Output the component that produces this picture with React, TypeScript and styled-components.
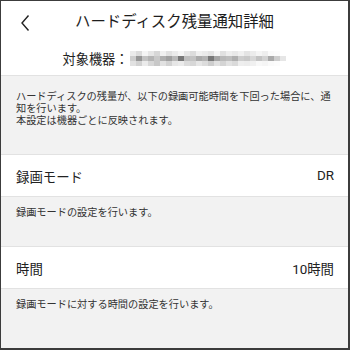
import React from "react";
import styled, { createGlobalStyle } from "styled-components";

const Global = createGlobalStyle`
  html, body { margin: 0; padding: 0; background: #fff; }
  * { box-sizing: border-box; }
`;

const Frame = styled.div`
  width: 350px;
  height: 350px;
  overflow: hidden;
  background: #f2f2f2;
  border-style: solid;
  border-color: #3c3c3c;
  border-width: 1px 2px 2px 1px;
  font-family: Roboto, "Noto Sans CJK JP", sans-serif;
  color: #222;
  display: flex;
  flex-direction: column;
`;

const Header = styled.header`
  background: #fff;
  height: 75px;
  border-bottom: 1px solid #e2e2e2;
  display: flex;
  flex-direction: column;
`;

const TitleBar = styled.div`
  position: relative;
  height: 40px;
  display: flex;
  align-items: center;
  justify-content: center;
`;

const Back = styled.button`
  position: absolute;
  left: 14px;
  top: 9px;
  width: 20px;
  height: 26px;
  border: none;
  background: none;
  padding: 0;
  display: flex;
  align-items: center;
  justify-content: center;
`;

const Title = styled.h1`
  margin: 0;
  font-size: 15.4px;
  font-weight: 400;
  line-height: 20px;
  color: #1e1e1e;
  transform: translate(0px, 1px);
`;

const Target = styled.div`
  display: flex;
  align-items: center;
  justify-content: center;
  height: 34px;
  font-size: 13.2px;
  color: #222;
  gap: 2px;
`;

const Blur = styled.div`
  display: grid;
  grid-template-columns: repeat(26, 6px);
  grid-template-rows: repeat(3, 5px);
`;

const Cell = styled.span<{ $g: number }>`
  display: block;
  background: ${(p) => `rgb(${p.$g},${p.$g},${p.$g})`};
`;

const Note = styled.div<{ $top: number; $bottom: number }>`
  padding: ${(p) => p.$top}px 15px ${(p) => p.$bottom}px 15px;
  font-size: 10.2px;
  line-height: 12px;
  color: #333;
`;

const Row = styled.div`
  background: #fff;
  height: 43px;
  border-top: 1px solid #e2e2e2;
  border-bottom: 1px solid #e2e2e2;
  display: flex;
  align-items: center;
  justify-content: space-between;
  padding: 0 14px 0 15px;
  font-size: 13.4px;
  color: #222;
`;

const Value = styled.span`
  font-size: 13.4px;
`;

const pattern = [
  [235, 220, 245, 230, 215, 240, 225, 235, 245, 230, 220, 240, 235, 228, 245, 225, 238, 232, 240, 228, 236, 245, 238, 250, 252, 255],
  [205, 150, 195, 180, 200, 175, 160, 185, 120, 190, 195, 170, 180, 120, 165, 185, 190, 175, 205, 200, 215, 195, 210, 170, 205, 230],
  [225, 210, 235, 215, 200, 225, 210, 230, 235, 220, 215, 230, 220, 205, 225, 212, 226, 218, 238, 236, 240, 248, 245, 250, 252, 255],
];

export default function App() {
  return (
    <>
      <Global />
      <Frame>
        <Header>
          <TitleBar>
            <Back aria-label="back">
              <svg width="12" height="18" viewBox="0 0 12 18">
                <polyline points="9.5,1.5 3,9 9.5,16.5" fill="none" stroke="#222" strokeWidth="1.4" />
              </svg>
            </Back>
            <Title>ハードディスク残量通知詳細</Title>
          </TitleBar>
          <Target>
            <span>対象機器：</span>
            <Blur>
              {pattern.map((r, i) => r.map((g, j) => <Cell key={`${i}-${j}`} $g={g} />))}
            </Blur>
          </Target>
        </Header>
        <Note $top={15} $bottom={27}>
          ハードディスクの残量が、以下の録画可能時間を下回った場合に、通知を行います。
          <br />
          本設定は機器ごとに反映されます。
        </Note>
        <Row>
          <span>録画モード</span>
          <Value>DR</Value>
        </Row>
        <Note $top={10} $bottom={27}>録画モードの設定を行います。</Note>
        <Row>
          <span>時間</span>
          <Value>10時間</Value>
        </Row>
        <Note $top={10} $bottom={0}>録画モードに対する時間の設定を行います。</Note>
      </Frame>
    </>
  );
}
